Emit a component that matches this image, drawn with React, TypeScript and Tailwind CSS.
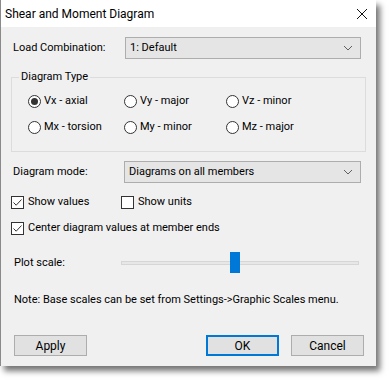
import React from 'react';

const font = { fontFamily: 'Roboto, "Segoe UI", Arial, sans-serif' };

const Chevron = () => (
  <svg width="10" height="6" viewBox="0 0 10 6" className="shrink-0">
    <path d="M1 1 L5 5 L9 1" fill="none" stroke="#606060" strokeWidth="1" />
  </svg>
);

const Select = ({ value }: { value: string }) => (
  <div className="flex-1 h-[22px] flex items-center justify-between pl-[4px] pr-[7px] bg-[#e5e5e5] border border-[#adadad] text-black">
    <span>{value}</span>
    <Chevron />
  </div>
);

const Radio = ({ label, checked }: { label: string; checked?: boolean }) => (
  <div className="flex items-center gap-[3px] h-[16px]">
    <div className="w-[13px] h-[13px] rounded-full border border-[#333] bg-white flex items-center justify-center">
      {checked && <div className="w-[7px] h-[7px] rounded-full bg-[#333]" />}
    </div>
    <span>{label}</span>
  </div>
);

const Checkbox = ({ label, checked }: { label: string; checked?: boolean }) => (
  <div className="flex items-center gap-[4px] h-[16px]">
    <div className="w-[13px] h-[13px] border border-[#333] bg-white flex items-center justify-center">
      {checked && (
        <svg width="11" height="11" viewBox="0 0 11 11">
          <path d="M1.5 5.5 L4.2 8.2 L9.5 2.5" fill="none" stroke="#333" strokeWidth="1" />
        </svg>
      )}
    </div>
    <span>{label}</span>
  </div>
);

export default function App() {
  return (
    <div className="w-[391px] h-[382px] bg-white" style={font}>
      <div className="w-[376px] h-[366px] flex flex-col border-l border-[#8a8a8a] shadow-[4px_5px_6px_rgba(0,0,0,0.55)] text-[11px] leading-[16px] text-black">
        <div className="h-[27px] shrink-0 bg-white flex items-center justify-between pl-[4px] pr-[8px]">
          <span className="text-[12px] text-black">Shear and Moment Diagram</span>
          <svg width="12" height="12" viewBox="0 0 12 12">
            <path d="M1 1 L11 11 M11 1 L1 11" stroke="#111" strokeWidth="1" />
          </svg>
        </div>
        <div className="flex-1 bg-[#f0f0f0] flex flex-col px-[10px]">
          <div className="flex items-center mt-[10px] pl-[2px] mr-[5px]">
            <span className="w-[112px]">Load Combination:</span>
            <Select value="1: Default" />
          </div>

          <fieldset className="mt-[10px] border border-[#dcdcdc] h-[83px]">
            <legend className="ml-[7px] px-[2px] leading-[16px]">Diagram Type</legend>
            <div className="grid grid-cols-[96px_102px_1fr] gap-y-[10px] mt-[8px] pl-[16px]">
              <Radio label="Vx - axial" checked />
              <Radio label="Vy - major" />
              <Radio label="Vz - minor" />
              <Radio label="Mx - torsion" />
              <Radio label="My - minor" />
              <Radio label="Mz - major" />
            </div>
          </fieldset>

          <div className="flex items-center mt-[9px] pl-[2px] mr-[5px]">
            <span className="w-[111px]">Diagram mode:</span>
            <Select value="Diagrams on all members" />
          </div>

          <div className="flex items-center mt-[11px]">
            <div className="w-[110px]">
              <Checkbox label="Show values" checked />
            </div>
            <Checkbox label="Show units" />
          </div>
          <div className="mt-[10px]">
            <Checkbox label="Center diagram values at member ends" checked />
          </div>

          <div className="flex items-center mt-[16px] pl-[3px] h-[22px]">
            <span className="w-[107px]">Plot scale:</span>
            <div className="relative w-[238px] h-[22px] flex items-center">
              <div className="w-full h-[4px] bg-[#e7e7e7] border border-[#d6d6d6]" />
              <div className="absolute left-[109px] top-0 w-[10px] h-[21px] bg-[#0078d7]" />
            </div>
          </div>

          <div className="mt-[18px] pl-[3px] whitespace-nowrap">Note: Base scales can be set from Settings-&gt;Graphic Scales menu.</div>

          <div className="flex items-center mt-[27px] pl-[3px]">
            <button className="w-[73px] h-[21px] bg-[#e1e1e1] border border-[#adadad] text-[12px]">Apply</button>
            <div className="flex-1" />
            <button className="w-[73px] h-[21px] bg-[#e1e1e1] border-2 border-[#0078d7] text-[12px]">OK</button>
            <button className="w-[73px] h-[21px] bg-[#e1e1e1] border border-[#adadad] ml-[12px] mr-[2px] text-[12px]">Cancel</button>
          </div>
        </div>
      </div>
    </div>
  );
}
